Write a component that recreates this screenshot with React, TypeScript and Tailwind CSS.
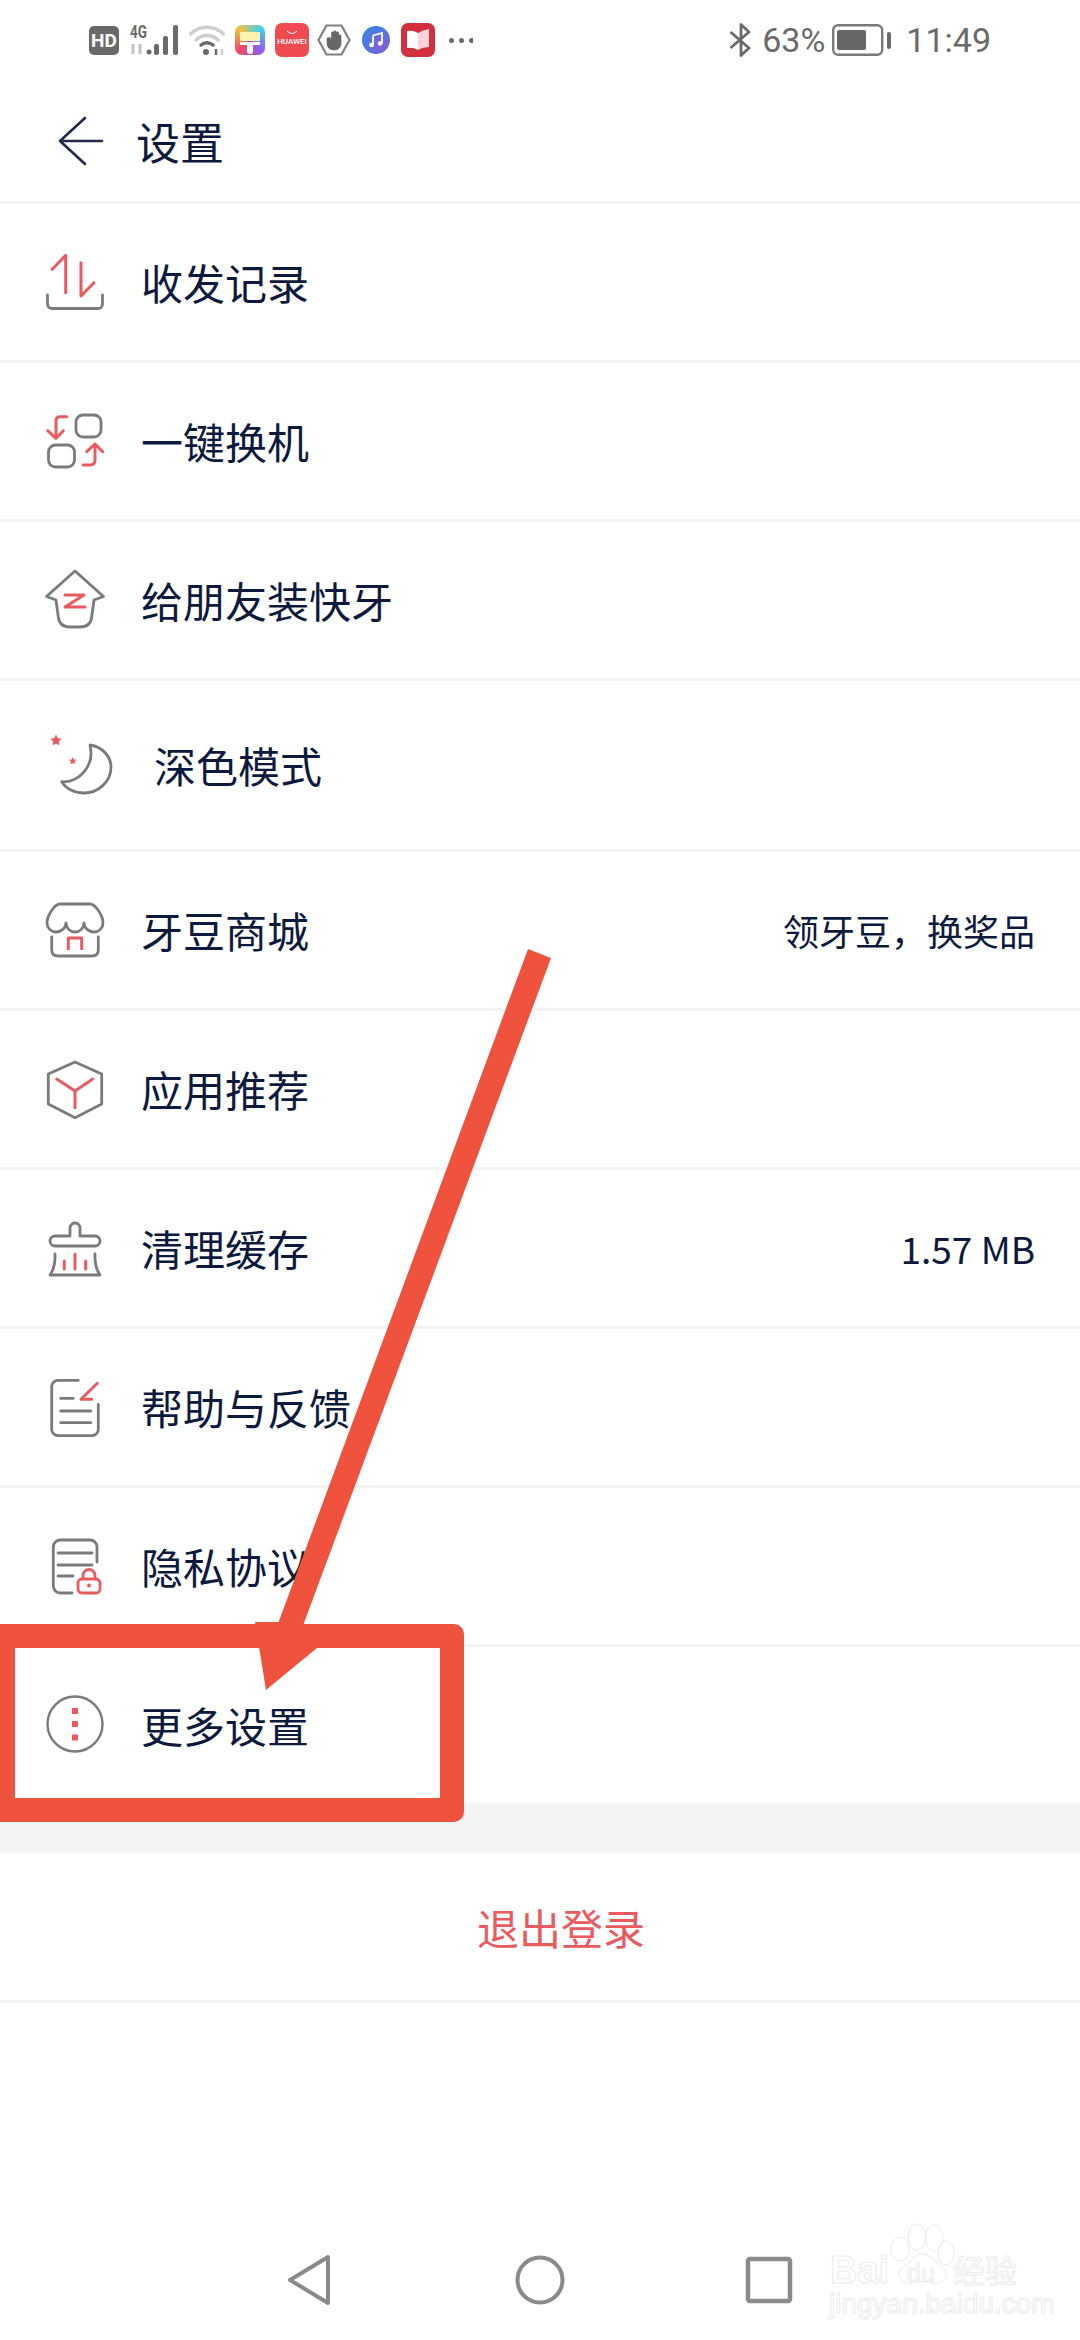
const GRAY = '#7b7b7b';
const RED = '#ea5b5f';

function Icon({ children, size = 60 }: { children: React.ReactNode; size?: number }) {
  return (
    <svg width={size} height={size} viewBox={`0 0 ${size} ${size}`} fill="none" strokeLinecap="round" strokeLinejoin="round" className="shrink-0">
      {children}
    </svg>
  );
}

const icons = {
  records: (
    <Icon>
      <path d="M7.300 17.300 20.700 3.300v37.400" stroke={RED} strokeWidth="3" />
      <path d="M36 10.700V44l13-13.300" stroke={RED} strokeWidth="3" />
      <path d="M2.500 43v9a4.500 4.500 0 0 0 4.500 4.500h46a4.500 4.500 0 0 0 4.500-4.500v-9" stroke={GRAY} strokeWidth="2.800" />
    </Icon>
  ),
  swap: (
    <Icon>
      <rect x="31" y="4" width="25" height="22" rx="7" stroke={GRAY} strokeWidth="2.800" />
      <rect x="3.500" y="34" width="26" height="22" rx="7" stroke={GRAY} strokeWidth="2.800" />
      <path d="M21.700 5.700H15q-4 0-4 4.300v17.300M2.700 19.700 11 27.300l7.300-7.600" stroke={RED} strokeWidth="3" />
      <path d="M38.300 54H45q5 0 5-5V33M41.700 40.700 50 33l7.700 7.700" stroke={RED} strokeWidth="3" />
    </Icon>
  ),
  share: (
    <Icon>
      <path d="M30 1 1.500 26.500 11 30l2.300 17q1.200 10 11.700 10h10q10.500 0 11.700-10L49 30l9.500-3.500Z" stroke={GRAY} strokeWidth="2.800" />
      <path d="M20 25h19L20 37h20" stroke={RED} strokeWidth="3" />
    </Icon>
  ),
  moon: (
    <Icon size={62}>
      <path d="m5 0 1.700 3.800 4.100.400-3.100 2.800.900 4.100L5 9l-3.600 2.100.900-4.100-3.100-2.800 4.100-.400Z" fill={RED} transform="translate(0 0.500)" />
      <path d="m21.700 23 1.100 2.500 2.700.300-2 1.800.600 2.700-2.400-1.400-2.400 1.400.600-2.700-2-1.800 2.700-.300Z" fill={RED} />
      <path d="M39 11c13 2 21 12 21 22 0 15-13 26-27 26-10 0-19-5-22.300-11.300C28 49 44 32 39 11Z" stroke={GRAY} strokeWidth="2.800" />
    </Icon>
  ),
  store: (
    <Icon>
      <path d="M15 4h30c5 0 13 11 13 19 0 5-4 9-9 9s-10-4-10-9c0 5-4 9-9 9s-9-4-9-9c0 5-5 9-10 9s-9-4-9-9c0-8 8-19 13-19Z" stroke={GRAY} strokeWidth="2.800" />
      <path d="M6.700 37v13q0 6 6.600 6h33.400q6.600 0 6.600-6V37" stroke={GRAY} strokeWidth="2.800" />
      <path d="M23.300 50V38h13.400v12" stroke={RED} strokeWidth="3" strokeLinecap="butt" />
    </Icon>
  ),
  box: (
    <Icon>
      <path d="m30 3 26.700 12v30L30 58.700 3.300 45V15Z" stroke={GRAY} strokeWidth="2.800" />
      <path d="m11.700 20 18.300 12 17.700-12M30 32v16.700" stroke={RED} strokeWidth="3" />
    </Icon>
  ),
  brush: (
    <Icon>
      <path d="M25 18v-8a5 5 0 0 1 10 0v8h15a5 5 0 0 1 0 10H10a5 5 0 0 1 0-10Z" stroke={GRAY} strokeWidth="2.800" />
      <path d="M10 36q.500 13-5 21h50q-5.500-8-5-21" stroke={GRAY} strokeWidth="2.800" />
      <path d="M19.300 43v8M30 36.300V51M40.700 43v8" stroke={RED} strokeWidth="3" />
    </Icon>
  ),
  feedback: (
    <Icon>
      <path d="M33.300 3.300H13a6.300 6.300 0 0 0-6.300 6.300v42.700a6.300 6.300 0 0 0 6.300 6.300h34a6.300 6.300 0 0 0 6.300-6.300v-25" stroke={GRAY} strokeWidth="2.800" />
      <path d="M15.700 21.300h12.600M15.700 34h30M15.700 45.700h30" stroke={GRAY} strokeWidth="2.800" />
      <path d="M52.300 6.300 36 22.300h10.700" stroke={RED} strokeWidth="3" />
    </Icon>
  ),
  privacy: (
    <Icon>
      <path d="M52 26V11a7 7 0 0 0-7-7H15.300a7 7 0 0 0-7 7v39a7 7 0 0 0 7 7H27" stroke={GRAY} strokeWidth="2.800" />
      <path d="M13 17h34M13 29h34M13 40h15" stroke={GRAY} strokeWidth="2.800" />
      <rect x="33" y="43" width="22" height="14" rx="4" stroke={RED} strokeWidth="2.800" />
      <path d="M38 43v-3.500a6 6 0 0 1 12 0V43" stroke={RED} strokeWidth="2.800" />
      <circle cx="44" cy="49.500" r="2" fill={RED} />
    </Icon>
  ),
  more: (
    <Icon>
      <circle cx="30" cy="29" r="27.500" stroke={GRAY} strokeWidth="2.400" />
      <rect x="27" y="13" width="6" height="6" fill={RED} />
      <rect x="27" y="26" width="6" height="6" fill={RED} />
      <rect x="27" y="39.500" width="6" height="6" fill={RED} />
    </Icon>
  ),
};

const rows = [
  { label: '收发记录', icon: icons.records },
  { label: '一键换机', icon: icons.swap },
  { label: '给朋友装快牙', icon: icons.share },
  { label: '深色模式', icon: icons.moon, tall: true },
  { label: '牙豆商城', icon: icons.store, value: '领牙豆，换奖品' },
  { label: '应用推荐', icon: icons.box },
  { label: '清理缓存', icon: icons.brush, value: '1.57 MB', wide: true },
  { label: '帮助与反馈', icon: icons.feedback },
  { label: '隐私协议', icon: icons.privacy },
  { label: '更多设置', icon: icons.more, last: true },
];

function StatusBar() {
  return (
    <div className="flex h-[80px] items-center pl-[89px] pr-[89px] text-[#6a6a6a] font-['Roboto',sans-serif]">
      <div className="flex h-[29px] w-[30px] items-center justify-center rounded-[5px] bg-[#6a6a6a] font-['Roboto',sans-serif] text-[19px] font-bold leading-none text-white">HD</div>
      <svg width="49" height="40" viewBox="0 -4 49 40" className="ml-[11px]">
        <text x="0" y="14" fontSize="18" fontWeight="700" fontFamily="Roboto" fill="#6a6a6a" textLength="17" lengthAdjust="spacingAndGlyphs">4G</text>
        <path d="M3 20v10M10 20v10" stroke="#c4c4c4" strokeWidth="3" />
        <circle cx="19" cy="28" r="2.500" fill="#6a6a6a" />
        <rect x="24" y="20" width="5" height="11" rx="2" fill="#6a6a6a" />
        <rect x="33" y="12" width="5" height="19" rx="2" fill="#6a6a6a" />
        <rect x="43" y="1" width="5" height="30" rx="2" fill="#6a6a6a" />
      </svg>
      <svg width="36" height="32" viewBox="0 0 36 32" fill="none" className="ml-[10px]">
        <path d="M1.500 10C11 1 25 1 34.500 10" stroke="#cfcfcf" strokeWidth="3.500" strokeLinecap="round" />
        <path d="M7 16c6-6 16-6 22 0" stroke="#cfcfcf" strokeWidth="3.500" strokeLinecap="round" />
        <path d="M12 21c3.500-3 8.500-3 12 0" stroke="#6a6a6a" strokeWidth="3.500" strokeLinecap="round" />
        <circle cx="17" cy="28" r="3" fill="#6a6a6a" />
        <path d="M27 25v6" stroke="#6a6a6a" strokeWidth="2.500" />
        <path d="M33 25v6" stroke="#cfcfcf" strokeWidth="2.500" />
      </svg>
      <div className="relative ml-[10px] h-[30px] w-[30px] overflow-hidden rounded-[7px] bg-[conic-gradient(from_315deg,#f0c040,#44d0f0_25%,#8f5cf5_50%,#f0486a_75%,#f0c040)]">
        <div className="mx-auto mt-[7px] h-[9px] w-[20px] rounded-[1px] bg-[#fff3b0]" />
        <div className="mx-auto mt-[1px] h-[3px] w-[20px] bg-white" />
        <div className="mx-auto h-[9px] w-[6px] rounded-b-[3px] bg-white" />
      </div>
      <div className="ml-[10px] flex h-[34px] w-[34px] flex-col items-center rounded-[7px] bg-[#ef4b50] text-white">
        <svg width="12" height="5" viewBox="0 0 12 5" fill="none" className="mt-[7px]">
          <path d="M1 1q5 5 10 0" stroke="#ffffff" strokeWidth="1" />
        </svg>
        <span className="mt-[3px] font-['Roboto',sans-serif] text-[8px] font-medium leading-none">HUAWEI</span>
      </div>
      <svg width="34" height="32" viewBox="0 0 34 32" fill="none" className="ml-[8px]">
        <path d="M9.500 1.500h15L32.500 16l-8 14.500h-15L1.500 16Z" stroke="#808080" strokeWidth="2.200" />
        <path d="M10 14v5c0 5 3 7 7 7s7-2 7-7v-7a1.200 1.200 0 0 0-2.400 0v3V9a1.200 1.200 0 0 0-2.400 0v5V8a1.200 1.200 0 0 0-2.400 0v6V9a1.200 1.200 0 0 0-2.400 0v7l-1-2a1.100 1.100 0 0 0-2 0Z" fill="#666666" stroke="#666666" strokeWidth=".6" />
      </svg>
      <div className="ml-[11px] flex h-[28px] w-[28px] items-center justify-center rounded-full bg-[radial-gradient(circle_at_70%_70%,#8a5ad8,#3f7fe0_70%)]">
        <svg width="14" height="16" viewBox="0 0 14 16">
          <path d="M4 3.500 13 1v10.500" stroke="#ffffff" strokeWidth="1.800" fill="none" />
          <path d="M4 3.500V13" stroke="#ffffff" strokeWidth="1.800" />
          <circle cx="2.500" cy="13" r="2.300" fill="#ffffff" />
          <circle cx="11" cy="11.500" r="2.300" fill="#ffffff" />
        </svg>
      </div>
      <div className="ml-[11px] flex h-[34px] w-[34px] items-center justify-center rounded-[7px] bg-[#d2303f]">
        <svg width="24" height="22" viewBox="0 0 24 22">
          <path d="M1 2q6-1 11 2v17q-5-3-11-2Z" fill="#ffffff" />
          <path d="M12 4q5-3 11-4v18q-6 0-11 3Z" fill="#fbd3d8" />
        </svg>
      </div>
      <div className="ml-[14px] flex gap-[5px]">
        <span className="h-[5px] w-[5px] rounded-full bg-[#6a6a6a]" />
        <span className="h-[5px] w-[5px] rounded-full bg-[#6a6a6a]" />
        <span className="h-[5px] w-[4px] rounded-l-full bg-[#6a6a6a]" />
      </div>

      <svg width="22" height="34" viewBox="0 0 22 34" fill="none" className="ml-auto" stroke="#6a6a6a" strokeWidth="2.800" strokeLinejoin="round">
        <path d="M1.500 9 20 25l-8 7.500V1.500l8 7.500L1.500 25" />
      </svg>
      <span className="ml-[11px] text-[34px] leading-none">63%</span>
      <svg width="60" height="32" viewBox="0 0 60 32" className="ml-[7px]">
        <rect x="1.200" y="1.200" width="49" height="29.600" rx="5" fill="none" stroke="#7a7a7a" strokeWidth="2.400" />
        <rect x="5" y="6" width="29" height="20" rx="2" fill="#666666" />
        <rect x="55" y="8" width="4" height="17" rx="2" fill="#6a6a6a" />
      </svg>
      <span className="ml-[14px] text-[34px] leading-none">11:49</span>
    </div>
  );
}

function Watermark() {
  const outline = "text-transparent [-webkit-text-stroke:1px_#ececec] leading-none";
  return (
    <div className="absolute left-[826px] top-[2222px] h-[100px] w-[200px]">
      <svg width="200" height="66" viewBox="0 0 200 66" fill="none" stroke="#ebebeb" strokeWidth="1" className="absolute left-0 top-0">
        <ellipse cx="74" cy="27" rx="9" ry="12" />
        <ellipse cx="91" cy="15" rx="9" ry="13" />
        <ellipse cx="108" cy="16" rx="9" ry="13" />
        <ellipse cx="120" cy="31" rx="8" ry="12" />
        <path d="M96 32c-8 0-10 8-16 11-6 3-8 8-6 13 2 5 8 6 12 5 6-2 14-2 20 0 5 1 12 0 14-6 1-5-1-9-6-12-6-3-9-11-18-11Z" />
      </svg>
      <span className={`absolute left-[4px] top-[29px] font-['Liberation_Sans',sans-serif] text-[38px] font-bold ${outline}`}>Bai</span>
      <span className={`absolute left-[81px] top-[39px] font-['Liberation_Sans',sans-serif] text-[25px] ${outline}`}>du</span>
      <span className={`absolute left-[127px] top-[31px] font-['Noto_Sans_CJK_SC',sans-serif] text-[32px] ${outline}`}>经验</span>
      <span className={`absolute left-[3px] top-[68px] font-['Liberation_Sans',sans-serif] text-[28px] ${outline}`}>jingyan.baidu.com</span>
    </div>
  );
}

export default function App() {
  return (
    <div className="relative flex min-h-[2340px] flex-col overflow-hidden bg-white font-['Noto_Sans_CJK_SC',sans-serif] text-[#0e1a3d]">
      <StatusBar />

      <div className="flex h-[124px] items-center border-b-[3px] border-[#f3f3f3] pl-[58px]">
        <svg width="46" height="50" viewBox="0 0 46 50" fill="none" stroke="#232a4d" strokeWidth="2.600" strokeLinecap="round" strokeLinejoin="round">
          <path d="M27 2 2 25l25 23M2 25h42" />
        </svg>
        <span className="ml-[32px] text-[44px] leading-none">设置</span>
      </div>

      <div>
        {rows.map(row => (
          <div
            key={row.label}
            className={`flex items-center pl-[45px] pr-[45px] ${row.last ? 'h-[156px]' : 'border-b-[3px] border-[#f3f3f3]'} ${row.tall ? 'h-[171px]' : ''} ${!row.tall && !row.last ? 'h-[159px]' : ''}`}
          >
            <div className={row.tall ? 'ml-[6px]' : ''}>{row.icon}</div>
            <span className={`text-[42px] leading-none ${row.tall ? 'ml-[41px]' : 'ml-[36px]'}`}>{row.label}</span>
            {row.value && <span className={`ml-auto leading-none ${row.wide ? 'text-[37px]' : 'text-[36px]'}`}>{row.value}</span>}
          </div>
        ))}
      </div>

      <div className="h-[50px] bg-[#f4f4f4]" />

      <div className="flex h-[150px] items-center justify-center border-b-[3px] border-[#f3f3f3] pl-[42px] text-[42px] text-[#ea5b5f]">
        退出登录
      </div>

      <div className="mt-auto flex h-[120px] items-center pl-[286px]">
        <svg width="46" height="52" viewBox="0 0 46 52" fill="none" stroke="#8a8a8a" strokeWidth="4" strokeLinejoin="round">
          <path d="M42 3v46L4 26Z" />
        </svg>
        <svg width="50" height="50" viewBox="0 0 50 50" fill="none" stroke="#8a8a8a" strokeWidth="4" className="ml-[183px]">
          <circle cx="25" cy="25" r="22.500" />
        </svg>
        <svg width="50" height="50" viewBox="0 0 50 50" fill="none" stroke="#8a8a8a" strokeWidth="4.500" strokeLinejoin="round" className="ml-[179px]">
          <rect x="4" y="4" width="42" height="42" rx="2" />
        </svg>
      </div>

      <Watermark />

      {/* red annotation over the page */}
      <svg width="1080" height="2340" viewBox="0 0 1080 2340" className="pointer-events-none absolute left-0 top-0">
        <path d="M528 949 551 958 303.600 1624 295 1648H317L266 1690 255 1622H278.600Z" fill="#ef533d" />
      </svg>
      <div className="pointer-events-none absolute left-0 top-[1624px] h-[198px] w-[464px] rounded-r-[10px] border-[24px] border-l-[15px] border-[#ef533d]" />
    </div>
  );
}
